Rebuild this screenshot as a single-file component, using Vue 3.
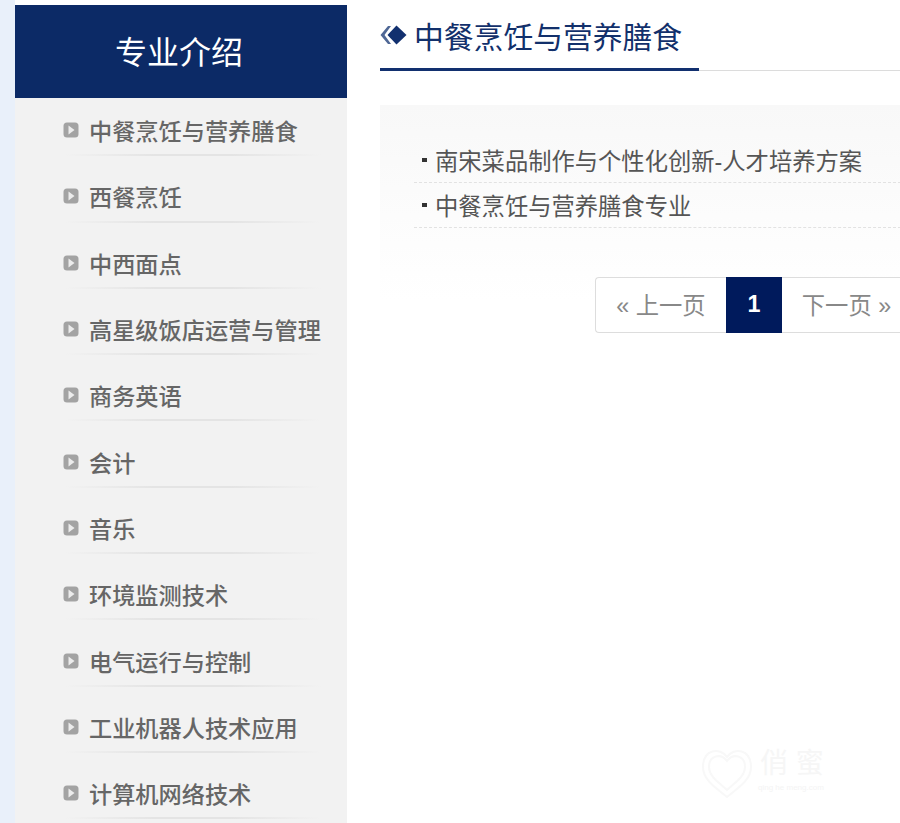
<script setup>
const majors = ['中餐烹饪与营养膳食','西餐烹饪','中西面点','高星级饭店运营与管理','商务英语','会计','音乐','环境监测技术','电气运行与控制','工业机器人技术应用','计算机网络技术']
const articles = ['南宋菜品制作与个性化创新-人才培养方案','中餐烹饪与营养膳食专业']
</script>

<template>
  <div class="page">
    <aside class="sidebar">
      <h2 class="side-title">专业介绍</h2>
      <ul class="side-list">
        <li v-for="m in majors" :key="m" class="side-item">
          <svg class="arrow" width="16" height="16" viewBox="0 0 16 16">
            <rect x="0.5" y="0.5" width="15" height="15" rx="3.5" fill="#a3a3a3"/>
            <path d="M5.5 3.5 L11.5 8 L5.5 12.5 Z" fill="#ececec"/>
          </svg>
          <span>{{ m }}</span>
        </li>
      </ul>
    </aside>
    <main class="main">
      <div class="head">
        <svg class="diamond" width="27" height="20" viewBox="0 0 27 20">
          <path d="M8 1 L0.5 10 L8 19 L11 19 L4.5 10 L11 1 Z" fill="#4f6795"/>
          <path d="M16.5 0.5 L7.5 10 L16.5 19.5 L26.5 10 Z" fill="#12306f"/>
        </svg>
        <h1>中餐烹饪与营养膳食</h1>
      </div>
      <section class="panel">
        <ul class="articles">
          <li v-for="a in articles" :key="a"><i class="dot"></i>{{ a }}</li>
        </ul>
      </section>
      <nav class="pager">
        <a class="prev">« 上一页</a>
        <a class="cur">1</a>
        <a class="next">下一页 »</a>
      </nav>
    </main>
    <div class="mark">
      <svg width="54" height="56" viewBox="0 0 54 56" fill="none" stroke="#f8f8f8" stroke-width="2">
        <path d="M27 12 C20 2 3 4 3 22 C3 36 18 44 27 52 C36 44 51 36 51 22 C51 4 34 2 27 12 Z"/>
        <path d="M27 16 C21 8 9 10 9 22 C9 32 20 38 27 45 C34 38 45 32 45 22 C45 10 33 8 27 16 Z"/>
      </svg>
      <div class="mark-copy">
        <span class="mark-text">俏 蜜</span>
        <span class="mark-url">qing he meng.com</span>
      </div>
    </div>
  </div>
</template>

<style scoped>
.page {
  position: relative;
  display: flex;
  width: 900px;
  height: 823px;
  overflow: hidden;
  background: #fff;
  font-family: "Liberation Sans", "Noto Sans CJK SC", sans-serif;
}
.page::before {
  content: "";
  flex: 0 0 15px;
  background: #e9f0fa;
}
.sidebar {
  flex: 0 0 332px;
  margin-top: 5px;
  background: #f2f2f2;
}
.side-title {
  margin: 0;
  height: 93px;
  padding: 3px 4px 0 0;
  box-sizing: border-box;
  line-height: 91px;
  text-align: center;
  background: #0c2a66;
  color: #fff;
  font-size: 32px;
  font-weight: 400;
}
.side-list {
  margin: 0;
  padding: 0;
  list-style: none;
}
.side-item {
  position: relative;
  display: flex;
  align-items: center;
  gap: 10px;
  height: 66.3px;
  padding: 0 0 0 48px;
  box-sizing: border-box;
  color: #666;
  font-size: 23.2px;
  font-weight: 500;
}
.side-item::after {
  content: "";
  position: absolute;
  left: 50px;
  right: 26px;
  bottom: 8px;
  height: 2px;
  background: linear-gradient(90deg, #f2f2f2, #e4e4e4 35%, #e4e4e4 65%, #f2f2f2);
}
.arrow {
  flex: none;
  margin-top: -2px;
}
.side-item span {
  position: relative;
  top: -1px;
}
.main {
  flex: 1;
  min-width: 0;
  padding: 0 0 0 33px;
  margin-right: -1px;
}
.head {
  position: relative;
  display: flex;
  align-items: center;
  gap: 7px;
  height: 71px;
  box-sizing: border-box;
  padding-bottom: 1px;
  border-bottom: 1px solid #dcdcdc;
}
.head::after {
  content: "";
  position: absolute;
  left: 0;
  bottom: -1px;
  width: 319px;
  height: 3px;
  background: #12306f;
}
.head h1 {
  margin: 0;
  color: #12306b;
  font-size: 29.8px;
  font-weight: 400;
}
.diamond {
  flex: none;
}
.panel {
  height: 195px;
  margin-top: 34px;
  padding: 33px 0 0 34px;
  box-sizing: border-box;
  background: linear-gradient(180deg, #f8f8f8, #fff);
}
.articles {
  margin: 0;
  padding: 0;
  list-style: none;
}
.articles li {
  display: flex;
  align-items: center;
  height: 45px;
  box-sizing: border-box;
  padding-left: 8px;
  border-bottom: 1px dashed #e2e2e2;
  color: #555;
  font-size: 23.3px;
}
.dot {
  flex: none;
  width: 5px;
  height: 4px;
  margin-right: 8px;
  background: #333;
}
.pager {
  display: flex;
  width: 320px;
  height: 56px;
  margin: -23px 0 0 215px;
  position: relative;
  font-size: 23.3px;
}
.pager a {
  display: flex;
  align-items: center;
  justify-content: center;
  box-sizing: border-box;
  padding-bottom: 2px;
  color: #888;
  background: #fff;
}
.prev {
  width: 131px;
  border: 1px solid #ddd;
  border-right: 0;
  border-radius: 4px 0 0 4px;
}
.pager .cur {
  width: 56px;
  background: #001a5c;
  color: #fff;
  font-weight: 700;
}
.next {
  width: 133px;
  padding-right: 3px;
  border: 1px solid #ddd;
  border-left: 0;
}
.mark {
  position: absolute;
  top: 745px;
  left: 700px;
  display: flex;
  align-items: flex-start;
  gap: 4px;
}
.mark-copy {
  display: flex;
  flex-direction: column;
  align-items: flex-end;
}
.mark-text {
  color: #f6f6f6;
  font-size: 28px;
  line-height: 38px;
  white-space: nowrap;
}
.mark-url {
  color: #f4f4f4;
  font-size: 8px;
  white-space: nowrap;
}
</style>
